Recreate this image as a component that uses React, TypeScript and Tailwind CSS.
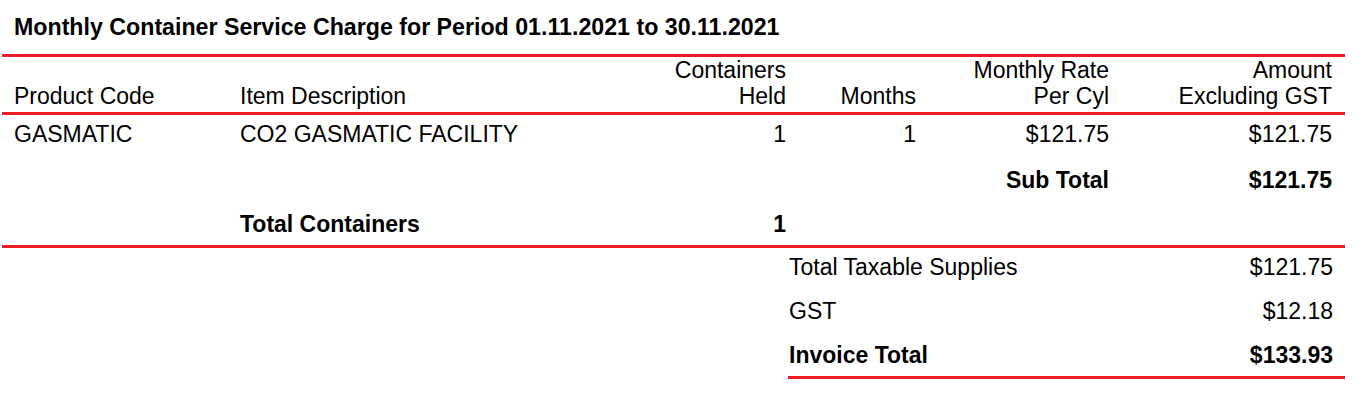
import React from "react";

const cols = "grid grid-cols-[226px_416px_130px_130px_193px_223px] pl-[12px] pr-[13px]";

function Row({ cells, bold }: { cells: string[]; bold?: boolean[] }) {
  return (
    <div className={cols}>
      {cells.map((c, i) => (
        <div
          key={i}
          className={`${i >= 2 ? "text-right" : "text-left"} ${bold && bold[i] ? "font-bold" : ""} whitespace-nowrap`}
        >
          {c}
        </div>
      ))}
    </div>
  );
}

function TotalLine({ label, value, strong }: { label: string; value: string; strong?: boolean }) {
  return (
    <div className={`flex justify-between pl-[1px] pr-[12px] ${strong ? "font-bold" : ""}`}>
      <span>{label}</span>
      <span>{value}</span>
    </div>
  );
}

export default function App() {
  return (
    <div className="bg-white w-[1371px] h-[409px] text-black font-['Liberation_Sans',Arial,sans-serif] text-[23px] leading-[26px]">
      <div className="ml-[2px] w-[1343px]">
        <div className="pl-[12px] pt-[14px] pb-[14px] text-[23.2px] font-bold whitespace-nowrap">
          Monthly Container Service Charge for Period 01.11.2021 to 30.11.2021
        </div>

        <div className="border-t-[3px] border-b-[3px] border-[#ed1c24] pb-[3px]">
          <div className={`${cols} items-end`}>
            <div>Product Code</div>
            <div>Item Description</div>
            <div className="text-right">
              Containers
              <br />
              Held
            </div>
            <div className="text-right">Months</div>
            <div className="text-right">
              Monthly Rate
              <br />
              Per Cyl
            </div>
            <div className="text-right">
              Amount
              <br />
              Excluding GST
            </div>
          </div>
        </div>

        <div className="border-b-[3px] border-[#ed1c24] pt-[6px] pb-[8px] flex flex-col gap-[20px]">
          <Row cells={["GASMATIC", "CO2 GASMATIC FACILITY", "1", "1", "$121.75", "$121.75"]} />
          <div className="flex flex-col gap-[18px]">
            <Row cells={["", "", "", "", "Sub Total", "$121.75"]} bold={[false, false, false, false, true, true]} />
            <Row cells={["", "Total Containers", "1", "", "", ""]} bold={[false, true, true, false, false, false]} />
          </div>
        </div>

        <div className="ml-[786px] border-b-[3px] border-[#ed1c24] pt-[6px] pb-[8px] flex flex-col gap-[18px]">
          <TotalLine label="Total Taxable Supplies" value="$121.75" />
          <TotalLine label="GST" value="$12.18" />
          <TotalLine label="Invoice Total" value="$133.93" strong />
        </div>
      </div>
    </div>
  );
}
